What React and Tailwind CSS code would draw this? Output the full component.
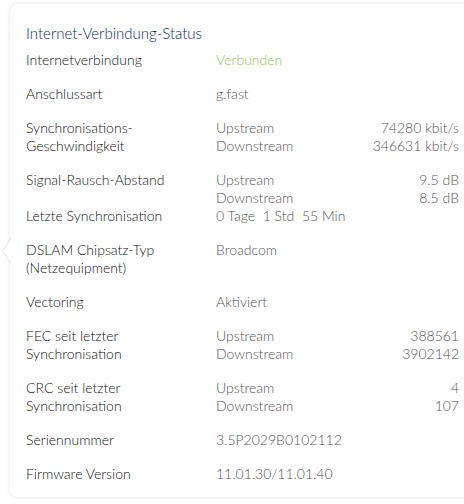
import React from "react";

const Pair = ({ up, down }) => (
  <div className="flex flex-col">
    <div className="flex justify-between">
      <span>Upstream</span>
      <span>{up}</span>
    </div>
    <div className="flex justify-between">
      <span>Downstream</span>
      <span>{down}</span>
    </div>
  </div>
);

const Row = ({ label, children, className = "" }) => (
  <div className={"grid grid-cols-[190px_1fr] " + className}>
    <div className="text-[#111111]">{label}</div>
    <div className="text-[#555555]">{children}</div>
  </div>
);

export default function App() {
  return (
    <div className="relative w-[464px] h-[504px] overflow-hidden bg-white font-light" style={{ fontFamily: "Lato, 'Open Sans', sans-serif" }}>
      <div className="relative ml-[10px] mt-[4px] w-[470px] h-[493px] rounded-[8px] bg-white shadow-[0_0_4px_rgba(0,0,0,0.14)] pl-[16px] pr-[21px] pt-[19px] text-[14px] leading-[18px]">
        <div className="text-[15px] leading-[20px] text-[#0f1f66]">Internet-Verbindung-Status</div>
        <div className="mt-[8px] flex flex-col gap-[16px]">
          <Row label="Internetverbindung">
            <span className="text-[#96c255]">Verbunden</span>
          </Row>
          <Row label="Anschlussart">g.fast</Row>
          <Row label={<>Synchronisations-<br />Geschwindigkeit</>}>
            <Pair up="74280 kbit/s" down="346631 kbit/s" />
          </Row>
          <div className="flex flex-col">
            <Row label="Signal-Rausch-Abstand">
              <Pair up="9.5 dB" down="8.5 dB" />
            </Row>
            <Row label="Letzte Synchronisation">
              <span className="whitespace-pre">0 Tage  1 Std  55 Min</span>
            </Row>
          </div>
          <Row label={<>DSLAM Chipsatz-Typ<br />(Netzequipment)</>}>Broadcom</Row>
          <Row label="Vectoring">Aktiviert</Row>
          <Row label={<>FEC seit letzter<br />Synchronisation</>}>
            <Pair up="388561" down="3902142" />
          </Row>
          <Row label={<>CRC seit letzter<br />Synchronisation</>}>
            <Pair up="4" down="107" />
          </Row>
          <Row label="Seriennummer">3.5P2029B0102112</Row>
          <Row label="Firmware Version">11.01.30/11.01.40</Row>
        </div>
      </div>
      <svg className="absolute left-[2px] top-[236px]" width="10" height="30" viewBox="0 0 10 30">
        <polygon points="10,1 0.5,15 10,29" fill="#ffffff" stroke="#e2e2e2" strokeWidth="1" />
        <rect x="9" y="0" width="2" height="30" fill="#ffffff" />
      </svg>
    </div>
  );
}
